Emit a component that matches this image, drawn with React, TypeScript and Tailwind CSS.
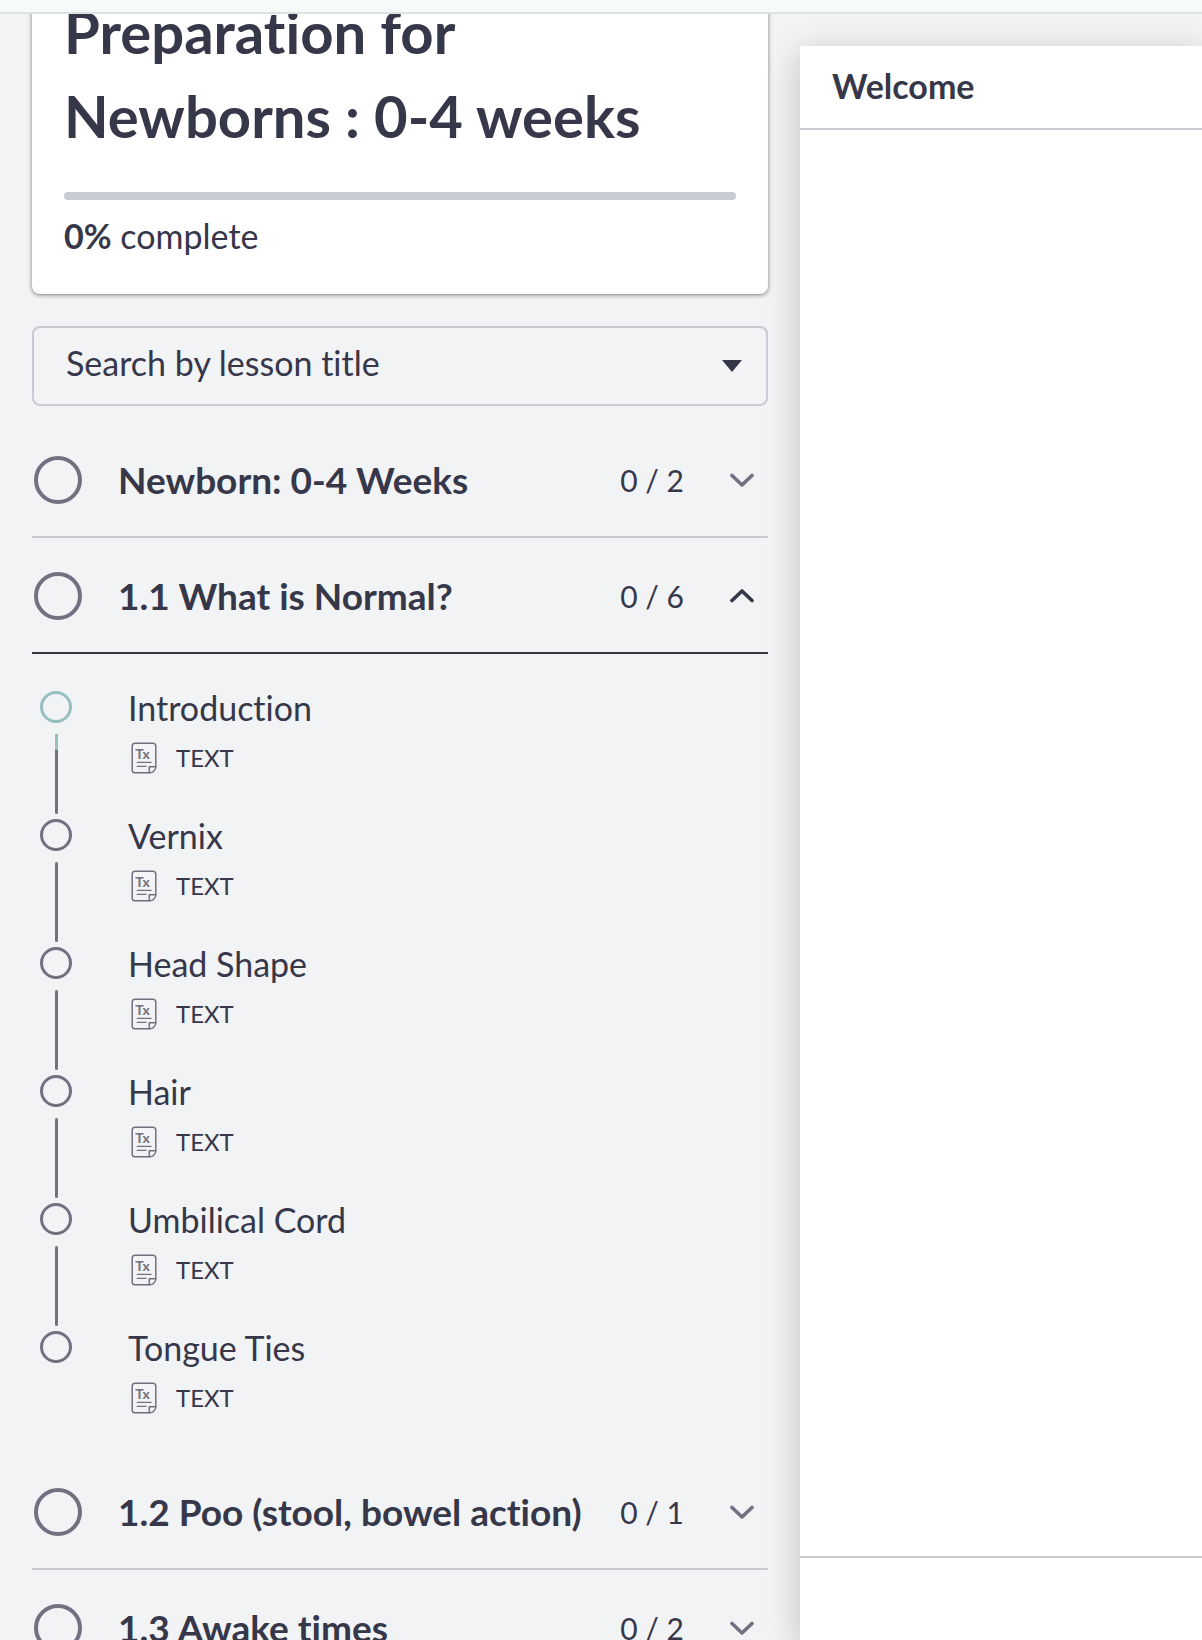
import { useState } from "react";

type Section = { title: string; total: number; lessons: string[] };

const sections: Section[] = [
  { title: "Newborn: 0-4 Weeks", total: 2, lessons: [] },
  {
    title: "1.1 What is Normal?",
    total: 6,
    lessons: ["Introduction", "Vernix", "Head Shape", "Hair", "Umbilical Cord", "Tongue Ties"],
  },
  { title: "1.2 Poo (stool, bowel action)", total: 1, lessons: [] },
  { title: "1.3 Awake times", total: 2, lessons: [] },
];

function Chevron({ open }: { open: boolean }) {
  return (
    <svg
      viewBox="0 0 24 16"
      className={open ? "h-4 w-6 shrink-0 text-[#37374a]" : "h-4 w-6 shrink-0 text-[#717181]"}
      fill="none"
      stroke="currentColor"
      strokeWidth="3.6"
      strokeLinecap="round"
      strokeLinejoin="round"
      aria-hidden="true"
    >
      <path d={open ? "M2 12.5 12 3l10 9.5" : "M2 3.5 12 13 22 3.5"} />
    </svg>
  );
}

function TextLessonIcon() {
  return (
    <svg viewBox="0 0 32 32" className="size-8 shrink-0 text-[#717181]" fill="none" stroke="currentColor" strokeWidth="1.5" strokeLinecap="round" strokeLinejoin="round" aria-hidden="true">
      <path d="M7 1.2h18a2.8 2.8 0 0 1 2.8 2.8v20.5a6.3 6.3 0 0 1-6.3 6.3H7A2.8 2.8 0 0 1 4.2 28V4A2.8 2.8 0 0 1 7 1.2Z" />
      <path d="M21.3 30.8v-6h6.5" />
      <path d="M9.2 20.3h14M9.2 24.3h9" strokeWidth="1.3" />
      <text x="7.2" y="16.6" fill="currentColor" stroke="none" className="font-['Lato',sans-serif] text-[14px] font-bold">
        Tx
      </text>
    </svg>
  );
}

function LessonItem({ title, current, last }: { title: string; current: boolean; last: boolean }) {
  return (
    <li className="flex h-32">
      <div className="ml-2 flex w-8 shrink-0 flex-col items-center pt-[7px]" aria-hidden="true">
        <span className={current ? "size-8 shrink-0 rounded-full border-3 border-[#95bfc0]" : "size-8 shrink-0 rounded-full border-3 border-[#717181]"} />
        {!last && (
          <span className="mt-[11px] h-20 w-[3px] shrink-0 overflow-hidden rounded-full bg-[#717181]">
            {current && <span className="block h-4 bg-[#95bfc0]" />}
          </span>
        )}
      </div>
      <a href="#lesson" className="ml-14 block min-w-0 flex-1">
        <span className="block text-[34px] leading-[48px]">{title}</span>
        <span className="mt-2 flex items-center gap-4 text-2xl leading-9">
          <TextLessonIcon />
          TEXT
        </span>
      </a>
    </li>
  );
}

function CourseSection({ section, open, onToggle }: { section: Section; open: boolean; onToggle: () => void }) {
  return (
    <section>
      <h2>
        <button
          type="button"
          aria-expanded={open}
          onClick={onToggle}
          className={
            open
              ? "flex h-[116px] w-full items-center border-b-2 border-[#37374a] pt-[2px] pr-[14px] pl-[2px] text-left"
              : "flex h-[116px] w-full items-center border-b-2 border-[#c8cad4] pt-[2px] pr-[14px] pl-[2px] text-left"
          }
        >
          <span className="size-12 shrink-0 rounded-full border-4 border-[#717181]" />
          <span className="ml-9 min-w-0 flex-1 text-[37px] leading-[54px] font-bold">{section.title}</span>
          <span className="mr-[46px] ml-4 shrink-0 text-[30px] leading-[48px]">0 / {section.total}</span>
          <Chevron open={open} />
        </button>
      </h2>
      {open && section.lessons.length > 0 && (
        <ul className="pt-[30px] pb-[2px]">
          {section.lessons.map((lesson, i) => (
            <LessonItem key={lesson} title={lesson} current={i === 0} last={i === section.lessons.length - 1} />
          ))}
        </ul>
      )}
    </section>
  );
}

export default function App() {
  const [openIndex, setOpenIndex] = useState(1);

  return (
    <div className="flex h-screen flex-col overflow-hidden bg-[#f1f3f5] font-['Lato',sans-serif] text-[#37374a] [font-variant-ligatures:none]">
      <header className="z-10 h-[14px] shrink-0 border-b-2 border-[#dbe4e1] bg-[#f5fbf9]" />
      <div className="grid min-h-0 flex-1 grid-cols-[minmax(320px,800px)_minmax(400px,1fr)]">
        <aside className="min-h-0 overflow-hidden px-8">
          <div className="-mt-14 rounded-lg bg-white px-8 pt-8 pb-[34px] shadow-[0_1px_4px_rgba(0,0,0,0.5)]">
            <h1 className="max-w-[640px] text-[58px] leading-[84px] font-bold">Preparation for Newborns : 0-4 weeks</h1>
            <div role="progressbar" aria-label="Course progress" aria-valuenow={0} aria-valuemin={0} aria-valuemax={100} className="mt-[34px] h-2 rounded-full bg-[#c8cad4]" />
            <p className="mt-3 text-[34px] leading-[48px]">
              <strong className="font-bold">0%</strong> complete
            </p>
          </div>
          <div className="relative mt-8">
            <select aria-label="Search by lesson title" className="block h-20 w-full appearance-none rounded-lg border-2 border-[#c8cad4] bg-transparent pr-16 pb-2 pl-8 text-[34px]">
              <option>Search by lesson title</option>
            </select>
            <svg viewBox="0 0 20 12" className="pointer-events-none absolute top-[34px] right-[26px] h-3 w-5 fill-[#37374a]" aria-hidden="true">
              <path d="M0 0h20L10 12Z" />
            </svg>
          </div>
          <nav aria-label="Course contents" className="mt-4">
            {sections.map((section, i) => (
              <CourseSection key={section.title} section={section} open={openIndex === i} onToggle={() => setOpenIndex(openIndex === i ? -1 : i)} />
            ))}
          </nav>
        </aside>
        <main className="mt-8 flex min-h-0 flex-col bg-white shadow-[0_8px_32px_rgba(0,0,0,0.22)]">
          <div className="border-b-2 border-[#c8cad4] px-8 pt-4 pb-[18px]">
            <h2 className="text-[34px] leading-[48px] font-bold">Welcome</h2>
          </div>
          <div className="flex-1" />
          <footer className="h-[84px] shrink-0 border-t-2 border-[#c8cad4]" />
        </main>
      </div>
    </div>
  );
}
